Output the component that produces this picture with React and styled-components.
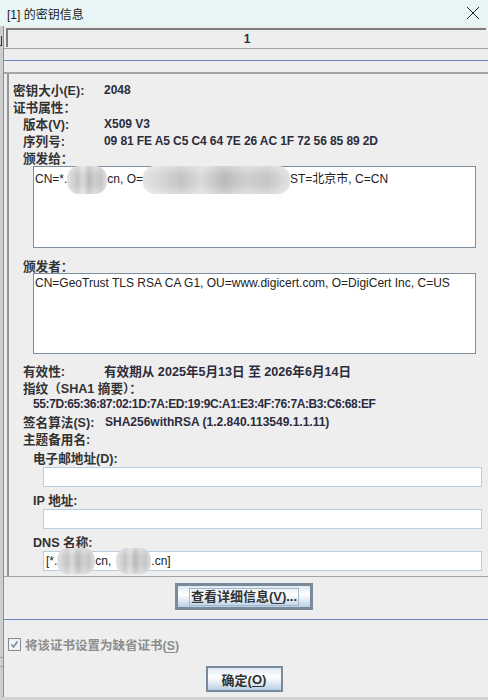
import React from 'react';
import styled, { createGlobalStyle } from 'styled-components';

const GlobalStyle = createGlobalStyle`
  html, body {
    margin: 0;
    padding: 0;
    background: #d2d2d2;
  }
  body {
    font-family: "Liberation Sans", "Noto Sans CJK SC", sans-serif;
  }
`;

const Screen = styled.div`
  width: 488px;
  height: 700px;
  display: flex;
  flex-direction: column;
  overflow: hidden;
  background: #d2d2d2;
`;

const TitleBar = styled.div`
  height: 26px;
  flex: none;
  display: flex;
  align-items: center;
  justify-content: space-between;
  padding: 0 8px 0 7px;
  background: #e8f6f7;
  font-size: 12px;
  color: #1a1a1a;
`;

const Body = styled.div`
  flex: none;
  height: 671px;
  display: flex;
`;

// strip of the window that lies behind the dialog
const BehindStrip = styled.div`
  width: 3px;
  flex: none;
  background: #cdcdcd;
  position: relative;
  overflow: hidden;
`;

const StripMark = styled.span`
  position: absolute;
  left: ${p => p.$x || 0}px;
  top: ${p => p.$y}px;
  width: ${p => p.$w}px;
  height: ${p => p.$h}px;
  background: ${p => p.$color};
`;

const Window = styled.div`
  flex: 1;
  display: flex;
  flex-direction: column;
  background: #eeeeee;
  border-left: 1px solid #8e8e8e;
`;

const TabHeader = styled.div`
  margin: 2px 2px 0 2px;
  height: 19px;
  box-sizing: border-box;
  border-top: 2px solid #7d7d7d;
  border-left: 2px solid #7d7d7d;
  display: flex;
  align-items: center;
  justify-content: center;
  font-size: 12px;
  font-weight: 700;
  color: #23304d;
`;

const Rule = styled.div`
  height: ${p => p.$h || 1}px;
  background: ${p => p.$color};
  margin-top: ${p => p.$top}px;
  flex: none;
`;

const Panel = styled.div`
  margin-left: 3px;
  border-left: 2px solid #959595;
  padding: 6px 0 5px 4px;
  display: flex;
  flex-direction: column;
`;

const Row = styled.div`
  height: 17px;
  display: grid;
  grid-template-columns: 91px 1fr;
  align-items: center;
  margin-top: ${p => p.$top || 0}px;
  font-size: 12px;
  font-weight: 700;
  white-space: nowrap;
`;

const Label = styled.span`
  padding-left: ${p => p.$indent || 0}px;
  color: #333333;
  font-size: 12.6px;
  ${p => p.$span && 'grid-column: 1 / 3;'}
`;

const Value = styled.span`
  color: #2b2c3d;
  margin-left: ${p => p.$shift || 0}px;
  font-size: ${p => p.$size || 12}px;
  letter-spacing: ${p => p.$ls || 0}px;
`;

const TextArea = styled.div`
  margin: ${p => p.$top}px 12px 0 20px;
  height: ${p => p.$h}px;
  box-sizing: border-box;
  background: #fff;
  border: 1px solid #7f8e9c;
  padding: 2px 1px;
  font-size: 12px;
  color: #222;
  white-space: nowrap;
`;

const Field = styled.div`
  margin: 2px 6px 0 30px;
  height: 20px;
  box-sizing: border-box;
  background: #fff;
  border: 1px solid #b7cde3;
  padding: 0 2px;
  display: flex;
  align-items: center;
  font-size: 12px;
  color: #222;
  white-space: nowrap;
`;

const Blur = styled.span`
  display: inline-block;
  vertical-align: middle;
  width: ${p => p.$w}px;
  height: ${p => p.$h || 28}px;
  margin: -10px 0 -10px ${p => p.$ml || 0}px;
  border-radius: ${p => (p.$h || 28) / 2.4}px;
  background:
    linear-gradient(180deg, rgba(255,255,255,0.35) 0%, rgba(255,255,255,0) 35%, rgba(255,255,255,0) 65%, rgba(255,255,255,0.35) 100%),
    linear-gradient(
      90deg,
      #e4e4e4 0%,
      #d6d6d6 12%,
      #c4c4c4 26%,
      #dadada 40%,
      #bababa 55%,
      #cfcfcf 70%,
      #c6c6c6 85%,
      #e2e2e2 100%
    );
`;

const ButtonRow = styled.div`
  display: flex;
  justify-content: center;
  margin-top: ${p => p.$top}px;
  padding-right: ${p => p.$pr || 0}px;
`;

const MetalButton = styled.button`
  width: ${p => p.$w}px;
  height: ${p => p.$h}px;
  box-sizing: border-box;
  border: 2px solid #7a8a99;
  border-width: ${p => p.$bw || 2}px;
  background: linear-gradient(180deg, #dde8f3 0%, #ffffff 40%, #e4ecf4 65%, #b8cfe5 100%);
  font-family: "Liberation Sans", "Noto Sans CJK SC", sans-serif;
  font-size: 13px;
  font-weight: 700;
  color: #333333;
  padding: 0;
  display: flex;
  align-items: center;
  justify-content: center;
`;

const FocusRing = styled.span`
  border: 1px solid #a3b8cc;
  padding: 0 1px;
  line-height: 16px;
`;

const Mnemonic = styled.u`
  text-decoration-thickness: 1px;
  text-underline-offset: 2px;
`;

const CheckRow = styled.div`
  margin-top: 17px;
  padding-left: 4px;
  height: 14px;
  display: flex;
  align-items: center;
  gap: 4px;
  font-size: 12.5px;
  font-weight: 700;
  color: #8d8d8d;
`;

const CheckBox = styled.span`
  width: 13px;
  height: 13px;
  box-sizing: border-box;
  border: 1px solid #7f8d9b;
  background: #f2f2f2;
  display: flex;
  align-items: center;
  justify-content: center;
`;

const CloseIcon = () => (
  <svg width="14" height="14" viewBox="0 0 14 14">
    <path d="M1 1 L13 13 M13 1 L1 13" stroke="#222" strokeWidth="1" />
  </svg>
);

const App = () => {
  return (
    <>
      <GlobalStyle />
      <Screen>
        <TitleBar>
          <span>[1] 的密钥信息</span>
          <CloseIcon />
        </TitleBar>
        <Body>
          <BehindStrip>
            <StripMark $x={1} $y={10} $w={1} $h={9} $color="#333" />
            <StripMark $x={0} $y={19} $w={2} $h={1} $color="#333" />
            <StripMark $y={631} $w={3} $h={1} $color="#9aa6b2" />
            <StripMark $y={640} $w={3} $h={1} $color="#9aa6b2" />
          </BehindStrip>
          <Window>
            <TabHeader>1</TabHeader>
            <Rule $color="#a2a2a2" $top={1} />
            <Rule $color="#6a86c0" $top={11} />
            <Rule $color="#a5a5a5" $top={11} $h={2} />

            <Panel>
              <Row>
                <Label>密钥大小(E):</Label>
                <Value>2048</Value>
              </Row>
              <Row>
                <Label $span>证书属性：</Label>
              </Row>
              <Row>
                <Label $indent={10}>版本(V):</Label>
                <Value>X509 V3</Value>
              </Row>
              <Row>
                <Label $indent={10}>序列号:</Label>
                <Value $ls={-0.1}>09 81 FE A5 C5 C4 64 7E 26 AC 1F 72 56 85 89 2D</Value>
              </Row>
              <Row>
                <Label $indent={10} $span>颁发给：</Label>
              </Row>
              <TextArea $top={1} $h={82}>
                CN=*.<Blur $w={40} />cn, O=<Blur $w={147} />ST=北京市, C=CN
              </TextArea>
              <Row $top={8}>
                <Label $indent={10} $span>颁发者：</Label>
              </Row>
              <TextArea $top={0} $h={81}>
                CN=GeoTrust TLS RSA CA G1, OU=www.digicert.com, O=DigiCert Inc, C=US
              </TextArea>
              <Row $top={7}>
                <Label $indent={10}>有效性:</Label>
                <Value $size={12.6}>有效期从 2025年5月13日 至 2026年6月14日</Value>
              </Row>
              <Row>
                <Label $indent={10} $span>指纹（SHA1 摘要）：</Label>
              </Row>
              <Row>
                <Label $indent={20} $span>
                  <Value $ls={-0.4}>55:7D:65:36:87:02:1D:7A:ED:19:9C:A1:E3:4F:76:7A:B3:C6:68:EF</Value>
                </Label>
              </Row>
              <Row>
                <Label $indent={10}>签名算法(S):</Label>
                <Value $shift={1}>SHA256withRSA (1.2.840.113549.1.1.11)</Value>
              </Row>
              <Row>
                <Label $indent={10} $span>主题备用名:</Label>
              </Row>
              <Row $top={2}>
                <Label $indent={20} $span>电子邮地址(D):</Label>
              </Row>
              <Field />
              <Row $top={3}>
                <Label $indent={20} $span>IP 地址:</Label>
              </Row>
              <Field />
              <Row $top={3}>
                <Label $indent={20} $span>DNS 名称:</Label>
              </Row>
              <Field>
                [*.<Blur $w={38} $h={26} />cn, <Blur $w={35} $h={26} $ml={5} />.cn]
              </Field>
            </Panel>

            <Rule $color="#a2a2a2" $top={0} />
            <ButtonRow $top={6} $pr={4}>
              <MetalButton $w={138} $h={27} $bw={3}>
                <FocusRing>
                  查看详细信息(<Mnemonic>V</Mnemonic>)...
                </FocusRing>
              </MetalButton>
            </ButtonRow>
            <Rule $color="#6a86c0" $top={9} />

            <CheckRow>
              <CheckBox>
                <svg width="9" height="9" viewBox="0 0 9 9">
                  <path d="M1.5 4.5 L3.5 7 L7.5 1.5" stroke="#7c8b9a" strokeWidth="1.6" fill="none" />
                </svg>
              </CheckBox>
              <span>
                将该证书设置为缺省证书(<Mnemonic>S</Mnemonic>)
              </span>
            </CheckRow>

            <ButtonRow $top={15} $pr={4}>
              <MetalButton $w={77} $h={26} $bw={2}>
                确定(<Mnemonic>O</Mnemonic>)
              </MetalButton>
            </ButtonRow>
          </Window>
        </Body>
      </Screen>
    </>
  );
};

export default App;
